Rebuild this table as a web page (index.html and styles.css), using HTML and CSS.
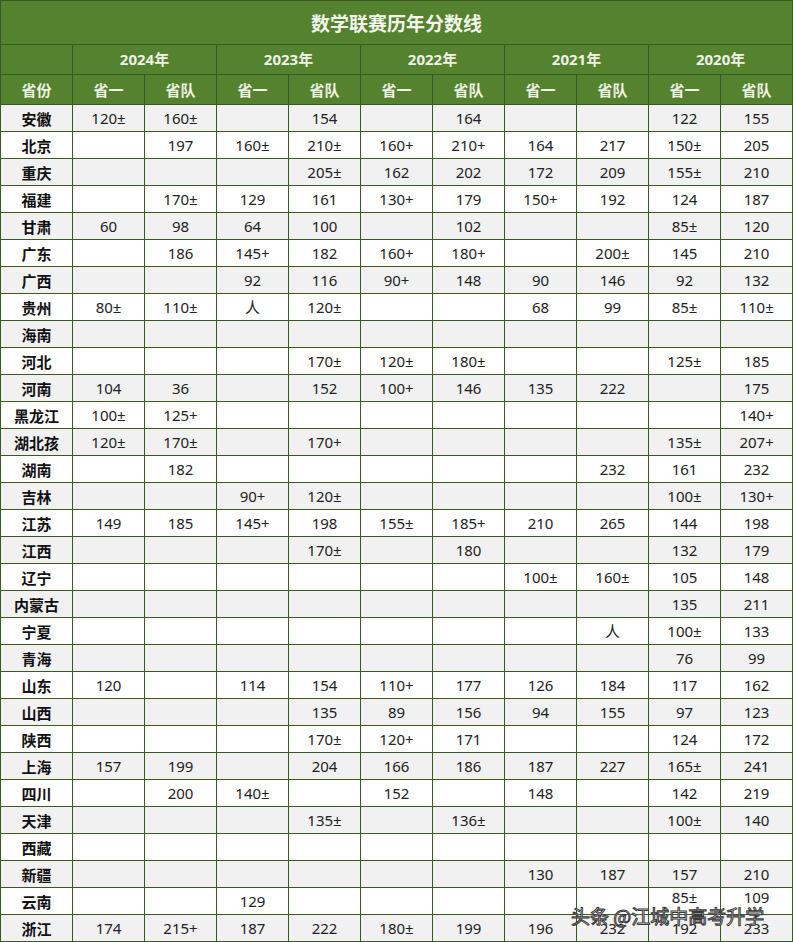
FILE: index.html
```html
<!DOCTYPE html>
<html lang="zh">
<head>
<meta charset="utf-8">
<title>数学联赛历年分数线</title>
<link rel="stylesheet" href="styles.css">
</head>
<body>
<div class="page">
<table class="scores">
<colgroup>
<col class="c"><col class="c"><col class="c"><col class="c"><col class="c"><col class="c"><col class="c"><col class="c"><col class="c"><col class="c"><col class="c-last">
</colgroup>
<thead>
<tr class="title-row"><th colspan="11">数学联赛历年分数线</th></tr>
<tr class="year-row"><th></th><th colspan="2">2024年</th><th colspan="2">2023年</th><th colspan="2">2022年</th><th colspan="2">2021年</th><th colspan="2">2020年</th></tr>
<tr class="head-row"><th>省份</th><th>省一</th><th>省队</th><th>省一</th><th>省队</th><th>省一</th><th>省队</th><th>省一</th><th>省队</th><th>省一</th><th>省队</th></tr>
</thead>
<tbody>
<tr><th>安徽</th><td>120±</td><td>160±</td><td></td><td>154</td><td></td><td>164</td><td></td><td></td><td>122</td><td>155</td></tr>
<tr><th>北京</th><td></td><td>197</td><td>160±</td><td>210±</td><td>160+</td><td>210+</td><td>164</td><td>217</td><td>150±</td><td>205</td></tr>
<tr><th>重庆</th><td></td><td></td><td></td><td>205±</td><td>162</td><td>202</td><td>172</td><td>209</td><td>155±</td><td>210</td></tr>
<tr><th>福建</th><td></td><td>170±</td><td>129</td><td>161</td><td>130+</td><td>179</td><td>150+</td><td>192</td><td>124</td><td>187</td></tr>
<tr><th>甘肃</th><td>60</td><td>98</td><td>64</td><td>100</td><td></td><td>102</td><td></td><td></td><td>85±</td><td>120</td></tr>
<tr><th>广东</th><td></td><td>186</td><td>145+</td><td>182</td><td>160+</td><td>180+</td><td></td><td>200±</td><td>145</td><td>210</td></tr>
<tr><th>广西</th><td></td><td></td><td>92</td><td>116</td><td>90+</td><td>148</td><td>90</td><td>146</td><td>92</td><td>132</td></tr>
<tr><th>贵州</th><td>80±</td><td>110±</td><td>人</td><td>120±</td><td></td><td></td><td>68</td><td>99</td><td>85±</td><td>110±</td></tr>
<tr><th>海南</th><td></td><td></td><td></td><td></td><td></td><td></td><td></td><td></td><td></td><td></td></tr>
<tr><th>河北</th><td></td><td></td><td></td><td>170±</td><td>120±</td><td>180±</td><td></td><td></td><td>125±</td><td>185</td></tr>
<tr><th>河南</th><td>104</td><td>36</td><td></td><td>152</td><td>100+</td><td>146</td><td>135</td><td>222</td><td></td><td>175</td></tr>
<tr><th>黑龙江</th><td>100±</td><td>125+</td><td></td><td></td><td></td><td></td><td></td><td></td><td></td><td>140+</td></tr>
<tr><th>湖北孩</th><td>120±</td><td>170±</td><td></td><td>170+</td><td></td><td></td><td></td><td></td><td>135±</td><td>207+</td></tr>
<tr><th>湖南</th><td></td><td>182</td><td></td><td></td><td></td><td></td><td></td><td>232</td><td>161</td><td>232</td></tr>
<tr><th>吉林</th><td></td><td></td><td>90+</td><td>120±</td><td></td><td></td><td></td><td></td><td>100±</td><td>130+</td></tr>
<tr><th>江苏</th><td>149</td><td>185</td><td>145+</td><td>198</td><td>155±</td><td>185+</td><td>210</td><td>265</td><td>144</td><td>198</td></tr>
<tr><th>江西</th><td></td><td></td><td></td><td>170±</td><td></td><td>180</td><td></td><td></td><td>132</td><td>179</td></tr>
<tr><th>辽宁</th><td></td><td></td><td></td><td></td><td></td><td></td><td>100±</td><td>160±</td><td>105</td><td>148</td></tr>
<tr><th>内蒙古</th><td></td><td></td><td></td><td></td><td></td><td></td><td></td><td></td><td>135</td><td>211</td></tr>
<tr><th>宁夏</th><td></td><td></td><td></td><td></td><td></td><td></td><td></td><td>人</td><td>100±</td><td>133</td></tr>
<tr><th>青海</th><td></td><td></td><td></td><td></td><td></td><td></td><td></td><td></td><td>76</td><td>99</td></tr>
<tr><th>山东</th><td>120</td><td></td><td>114</td><td>154</td><td>110+</td><td>177</td><td>126</td><td>184</td><td>117</td><td>162</td></tr>
<tr><th>山西</th><td></td><td></td><td></td><td>135</td><td>89</td><td>156</td><td>94</td><td>155</td><td>97</td><td>123</td></tr>
<tr><th>陕西</th><td></td><td></td><td></td><td>170±</td><td>120+</td><td>171</td><td></td><td></td><td>124</td><td>172</td></tr>
<tr><th>上海</th><td>157</td><td>199</td><td></td><td>204</td><td>166</td><td>186</td><td>187</td><td>227</td><td>165±</td><td>241</td></tr>
<tr><th>四川</th><td></td><td>200</td><td>140±</td><td></td><td>152</td><td></td><td>148</td><td></td><td>142</td><td>219</td></tr>
<tr><th>天津</th><td></td><td></td><td></td><td>135±</td><td></td><td>136±</td><td></td><td></td><td>100±</td><td>140</td></tr>
<tr><th>西藏</th><td></td><td></td><td></td><td></td><td></td><td></td><td></td><td></td><td></td><td></td></tr>
<tr><th>新疆</th><td></td><td></td><td></td><td></td><td></td><td></td><td>130</td><td>187</td><td>157</td><td>210</td></tr>
<tr><th>云南</th><td></td><td></td><td>129</td><td></td><td></td><td></td><td></td><td></td><td class="raised">85±</td><td class="raised">109</td></tr>
<tr><th>浙江</th><td>174</td><td>215+</td><td>187</td><td>222</td><td>180±</td><td>199</td><td>196</td><td>232</td><td>192</td><td>233</td></tr>
</tbody>
</table>
<div class="watermark">头条 @江城中高考升学</div>
</div>
</body>
</html>
```

FILE: styles.css
```css
html, body {
  margin: 0;
  padding: 0;
  background: #ffffff;
}

.page {
  position: relative;
  width: 793px;
  height: 942px;
  overflow: hidden;
}

.scores {
  border-collapse: collapse;
  table-layout: fixed;
  width: 792px;
  font-family: "Noto Sans", "Noto Sans CJK SC", sans-serif;
  font-size: 14px;
  color: #1e1e1e;
}

.scores col.c { width: 72px; }
.scores col.c-last { width: 72px; }

.scores th,
.scores td {
  border: 1px solid #3a5a24;
  padding: 0;
  text-align: center;
  vertical-align: middle;
  line-height: 1;
}

.scores th {
  font-family: "Noto Sans CJK SC", sans-serif;
}

.title-row th {
  height: 43px;
  background: #55822f;
  color: #f4f6ee;
  font-size: 19px;
  font-weight: bold;
}

.year-row th,
.head-row th {
  height: 29px;
  background: #55822f;
  color: #eef3e4;
  font-size: 15px;
  font-weight: bold;
}

.year-row th {
  font-family: "Noto Sans", "Noto Sans CJK SC", sans-serif;
}

.scores tbody tr {
  height: 27px;
}

.scores tbody th {
  font-weight: bold;
  font-size: 15px;
  color: #111111;
}

.scores tbody td {
  font-weight: normal;
  font-size: 15px;
  color: #222222;
}

.scores tbody tr:nth-child(odd) {
  background: #f1f1f1;
}

.scores tbody tr:nth-child(even) {
  background: #ffffff;
}

.scores td.raised {
  padding-bottom: 7px;
}

.watermark {
  position: absolute;
  left: 571px;
  top: 902px;
  font-family: "Noto Sans CJK SC", sans-serif;
  font-size: 19px;
  color: #ffffff;
  -webkit-text-stroke: 1px #3a3a3a;
  white-space: nowrap;
}
```
